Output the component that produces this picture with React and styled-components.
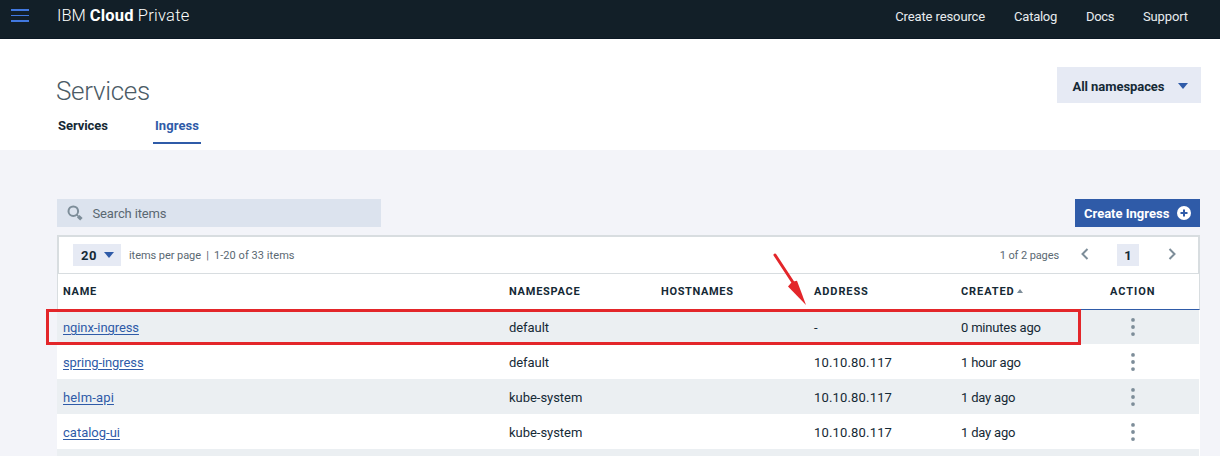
import React from 'react';
import styled, { createGlobalStyle } from 'styled-components';

const color = {
  nav: '#121f28',
  ink: '#152935',
  muted: '#5a6872',
  icon: '#7d8d99',
  blue: '#2f5ba8',
  page: '#f3f4f9',
  stripe: '#ebeff2',
  chip: '#e6eaf4',
  line: '#d8dde0',
  mark: '#e3262a',
};

const GlobalStyle = createGlobalStyle`
  * { box-sizing: border-box; }
  body { margin: 0; overflow: hidden; background: ${color.page}; font-family: Roboto, sans-serif; font-size: 13px; color: ${color.ink}; }
`;

const Page = styled.div`
  position: relative;
  height: 456px;
  overflow: hidden;
`;

const Tracked = styled.span`
  letter-spacing: ${(p) => p.$sp || 0}px;
  white-space: nowrap;
`;

const TopBar = styled.header`
  display: flex;
  height: 39px;
  padding: 0 32px 0 11px;
  background: ${color.nav};
  border-bottom: 1px solid #0b1824;
  color: #fff;
`;

const MenuButton = styled.svg`
  width: 18px;
  height: 14px;
  margin: 9px 28px 0 0;
`;

const Brand = styled.div`
  flex: 1;
  display: flex;
  gap: 4px;
  padding-top: 6px;
  font-size: 16.5px;
  line-height: 20px;
  font-weight: 300;
  b { font-weight: 700; }
`;

const NavLinks = styled.nav`
  display: flex;
  gap: 29px;
  padding-top: 7px;
  line-height: 20px;
  color: #e8ecef;
`;

const PageHeader = styled.section`
  display: flex;
  justify-content: space-between;
  height: 111px;
  padding: 28px 19px 0 56px;
  background: #fff;
`;

const Title = styled.h1`
  margin: 8px 0 0;
  font-size: 26px;
  line-height: 32px;
  font-weight: 300;
  color: #4b5b66;
`;

const Tabs = styled.div`
  display: flex;
  gap: 43px;
  margin-top: 9px;
`;

const Tab = styled.div`
  height: 28px;
  padding: 0 2px;
  line-height: 20px;
  font-weight: 700;
  color: ${(p) => (p.$active ? color.blue : color.ink)};
  border-bottom: 2px solid ${(p) => (p.$active ? color.blue : 'transparent')};
`;

const NamespaceSelect = styled.div`
  display: flex;
  align-items: center;
  justify-content: space-between;
  width: 144px;
  height: 36px;
  padding: 2px 13px 0 15.5px;
  background: ${color.chip};
  font-weight: 700;
`;

const Caret = styled.i`
  width: 0;
  height: 0;
  margin-top: -1px;
  border: solid transparent;
  border-width: 6px 5px 0;
  border-top-color: ${color.blue};
`;

const Content = styled.main`
  padding: 49px 20px 0 57px;
`;

const Toolbar = styled.div`
  display: flex;
  justify-content: space-between;
  height: 28px;
  margin-bottom: 8px;
`;

const Search = styled.div`
  display: flex;
  align-items: center;
  gap: 10px;
  width: 324px;
  padding-left: 9.5px;
  background: #dce3ee;
  color: ${color.muted};
`;

const CreateButton = styled.div`
  display: flex;
  align-items: center;
  justify-content: space-between;
  width: 125px;
  padding: 0 9px;
  background: ${color.blue};
  color: #fff;
  font-weight: 700;
`;

const Pagination = styled.div`
  display: flex;
  align-items: center;
  height: 39px;
  padding: 1px 22px 0 14px;
  background: #fff;
  border: solid ${color.line};
  border-width: 2px 2px 1px;
  font-size: 11px;
  color: ${color.muted};
`;

const PageSize = styled.div`
  display: flex;
  align-items: center;
  justify-content: space-between;
  width: 48px;
  height: 22px;
  margin: -1px 8px 0 0;
  padding: 1px 7px 0 8px;
  background: ${color.chip};
  color: ${color.ink};
  font-size: 13px;
  font-weight: 700;
`;

const Pipe = styled.span`
  width: 13px;
  text-align: center;
`;

const Pager = styled.div`
  display: flex;
  align-items: center;
  margin-left: auto;
`;

const CurrentPage = styled.div`
  width: 22px;
  height: 22px;
  margin: -1px 29px 0 28px;
  background: ${color.chip};
  color: ${color.ink};
  font-size: 13px;
  line-height: 23px;
  font-weight: 700;
  text-align: center;
`;

const Chevron = styled.svg`
  width: 8px;
  height: 12px;
  margin-top: -3px;
  fill: none;
  stroke: ${color.icon};
  stroke-width: 2;
`;

const BackChevron = styled(Chevron)`
  margin-left: 22px;
`;

const Row = styled.div`
  display: grid;
  grid-template-columns: 446px 152px 153px 147px 149px 1fr;
  align-items: center;
  height: 35px;
  padding: 1px 0 0 6px;
  background: ${(p) => (p.$striped ? color.stripe : '#fff')};
  border-right: 1px solid #fff;
`;

const HeadRow = styled(Row)`
  height: 36px;
  padding: 0 0 0 5px;
  background: #fff;
  border: solid ${color.line};
  border-width: 0 1px;
  border-bottom: 1px solid ${color.blue};
  font-size: 11px;
  font-weight: 700;
`;

const SortMark = styled.i`
  display: inline-block;
  margin-left: 2px;
  vertical-align: 2px;
  border: solid transparent;
  border-width: 0 3.5px 4px;
  border-bottom-color: ${color.icon};
`;

const Link = styled(Tracked)`
  color: ${color.blue};
  text-decoration: underline;
  text-underline-offset: 2px;
`;

const Kebab = styled.svg`
  width: 4px;
  height: 18px;
  margin-left: 21px;
  fill: ${color.icon};
`;

const Body = styled.div`
  ${Row}:first-child { height: 34px; }
  ${Row}:first-child ${Kebab} { margin-top: -1px; }
`;

const Highlight = styled.div`
  position: absolute;
  left: 46px;
  top: 309px;
  width: 1035px;
  height: 36px;
  border: 3px solid ${color.mark};
`;

const Arrow = styled.svg`
  position: absolute;
  left: 770px;
  top: 250px;
  width: 40px;
  height: 58px;
`;

const headings = [
  ['NAME', 0.7], ['NAMESPACE', 0.75], ['HOSTNAMES', 0.65],
  ['ADDRESS', 0.9], ['CREATED', 0.9], ['ACTION', 0.95],
];

const rows = [
  { name: 'nginx-ingress', sp: -0.09, ns: 'default', nsSp: -0.07, address: '-', created: '0 minutes ago' },
  { name: 'spring-ingress', sp: -0.1, ns: 'default', nsSp: -0.07, address: '10.10.80.117', created: '1 hour ago' },
  { name: 'helm-api', sp: 0.15, ns: 'kube-system', nsSp: -0.03, address: '10.10.80.117', created: '1 day ago' },
  { name: 'catalog-ui', sp: 0, ns: 'kube-system', nsSp: -0.03, address: '10.10.80.117', created: '1 day ago' },
];

export default function App() {
  return (
    <Page>
      <GlobalStyle />
      <TopBar>
        <MenuButton viewBox="0 0 18 14" fill="#4178df">
          <rect width="18" height="2" />
          <rect y="6" width="18" height="1" />
          <rect y="11" width="18" height="2" />
        </MenuButton>
        <Brand>
          <Tracked>IBM</Tracked>
          <Tracked as="b" $sp={0.2}>Cloud</Tracked>
          <Tracked $sp={0.25}>Private</Tracked>
        </Brand>
        <NavLinks>
          <Tracked $sp={-0.11}>Create resource</Tracked>
          <Tracked $sp={-0.25}>Catalog</Tracked>
          <Tracked $sp={-0.4}>Docs</Tracked>
          <Tracked $sp={-0.12}>Support</Tracked>
        </NavLinks>
      </TopBar>

      <PageHeader>
        <div>
          <Title><Tracked $sp={-0.3}>Services</Tracked></Title>
          <Tabs>
            <Tab><Tracked $sp={-0.06}>Services</Tracked></Tab>
            <Tab $active><Tracked $sp={0.08}>Ingress</Tracked></Tab>
          </Tabs>
        </div>
        <NamespaceSelect>
          <Tracked $sp={-0.06}>All namespaces</Tracked>
          <Caret />
        </NamespaceSelect>
      </PageHeader>

      <Content>
        <Toolbar>
          <Search>
            <svg width="16" height="16" viewBox="0 0 16 16" fill="none" stroke={color.icon}>
              <circle cx="6.3" cy="6.2" r="4.8" strokeWidth="2" />
              <path d="M9.5 9.5l2 2" strokeWidth="1.6" />
              <path d="M11.2 11.2l3.2 3" strokeWidth="3.6" />
            </svg>
            <Tracked $sp={-0.14}>Search items</Tracked>
          </Search>
          <CreateButton>
            <Tracked>Create Ingress</Tracked>
            <svg width="14" height="14" viewBox="0 0 14 14">
              <circle cx="7" cy="7" r="7" fill="#fff" />
              <path d="M7 3.5v7M3.5 7h7" stroke={color.blue} strokeWidth="2" />
            </svg>
          </CreateButton>
        </Toolbar>

        <Pagination>
          <PageSize>
            <Tracked $sp={0.5}>20</Tracked>
            <Caret />
          </PageSize>
          <Tracked $sp={-0.06}>items per page</Tracked>
          <Pipe>|</Pipe>
          <Tracked $sp={0.06}>1-20 of 33 items</Tracked>
          <Pager>
            <Tracked $sp={-0.1}>1 of 2 pages</Tracked>
            <BackChevron viewBox="0 0 8 12"><path d="M6.5 1L1.5 6l5 5" /></BackChevron>
            <CurrentPage>1</CurrentPage>
            <Chevron viewBox="0 0 8 12"><path d="M1.5 1l5 5-5 5" /></Chevron>
          </Pager>
        </Pagination>

        <HeadRow>
          {headings.map(([label, sp]) => (
            <div key={label}>
              <Tracked $sp={sp}>{label}</Tracked>
              {label === 'CREATED' && <SortMark />}
            </div>
          ))}
        </HeadRow>
        <Body>
          {rows.map((r, i) => (
            <Row key={r.name} $striped={i % 2 === 0}>
              <Link $sp={r.sp}>{r.name}</Link>
              <Tracked $sp={r.nsSp}>{r.ns}</Tracked>
              <span />
              <Tracked $sp={0.17}>{r.address}</Tracked>
              <Tracked $sp={-0.19}>{r.created}</Tracked>
              <Kebab viewBox="0 0 4 18">
                <circle cx="2" cy="1.9" r="1.9" />
                <circle cx="2" cy="9" r="1.9" />
                <circle cx="2" cy="16.1" r="1.9" />
              </Kebab>
            </Row>
          ))}
          <Row $striped />
        </Body>
      </Content>

      <Highlight />
      <Arrow viewBox="0 0 40 58" fill={color.mark}>
        <path d="M5 5L24 34" stroke={color.mark} strokeWidth="3" strokeLinecap="round" />
        <path d="M36 55L18 36.5l3-3.5 2.5-1.5 3.5-.8z" />
      </Arrow>
    </Page>
  );
}
